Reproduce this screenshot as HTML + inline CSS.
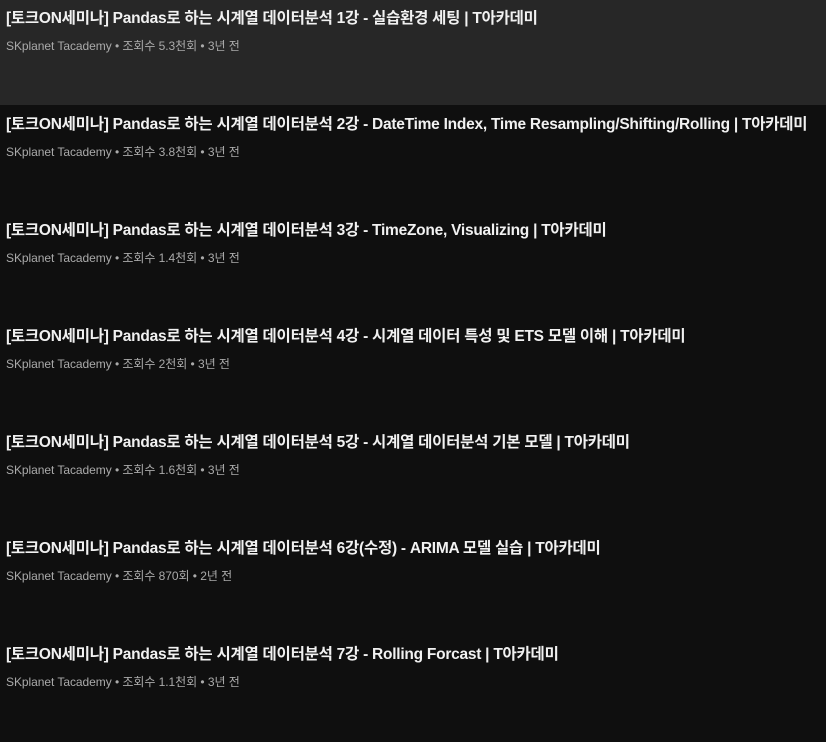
<!DOCTYPE html>
<html><head><meta charset="utf-8"><style>
body{margin:0;background:#0f0f0f;width:826px;height:737px;overflow:hidden;font-family:"Liberation Sans","Noto Sans CJK KR",sans-serif;}
.row{position:absolute;left:0;width:826px;height:106px;}
.row.h{background:#272727;height:105px}
.t{position:absolute;left:6px;top:8px;font-size:15.5px;font-weight:bold;color:#f1f1f1;white-space:nowrap;line-height:22px;letter-spacing:-0.25px}
.m{position:absolute;left:6px;top:38px;font-size:12px;color:#aaa;white-space:nowrap;line-height:16px;letter-spacing:-0.05px}
</style></head><body>
<div class="row h" style="top:0"><div class="t">[토크ON세미나] Pandas로 하는 시계열 데이터분석 1강 - 실습환경 세팅 | T아카데미</div><div class="m">SKplanet Tacademy • 조회수 5.3천회 • 3년 전</div></div>
<div class="row" style="top:106px"><div class="t">[토크ON세미나] Pandas로 하는 시계열 데이터분석 2강 - DateTime Index, Time Resampling/Shifting/Rolling | T아카데미</div><div class="m">SKplanet Tacademy • 조회수 3.8천회 • 3년 전</div></div>
<div class="row" style="top:212px"><div class="t">[토크ON세미나] Pandas로 하는 시계열 데이터분석 3강 - TimeZone, Visualizing | T아카데미</div><div class="m">SKplanet Tacademy • 조회수 1.4천회 • 3년 전</div></div>
<div class="row" style="top:318px"><div class="t">[토크ON세미나] Pandas로 하는 시계열 데이터분석 4강 - 시계열 데이터 특성 및 ETS 모델 이해 | T아카데미</div><div class="m">SKplanet Tacademy • 조회수 2천회 • 3년 전</div></div>
<div class="row" style="top:424px"><div class="t">[토크ON세미나] Pandas로 하는 시계열 데이터분석 5강 - 시계열 데이터분석 기본 모델 | T아카데미</div><div class="m">SKplanet Tacademy • 조회수 1.6천회 • 3년 전</div></div>
<div class="row" style="top:530px"><div class="t">[토크ON세미나] Pandas로 하는 시계열 데이터분석 6강(수정) - ARIMA 모델 실습 | T아카데미</div><div class="m">SKplanet Tacademy • 조회수 870회 • 2년 전</div></div>
<div class="row" style="top:636px"><div class="t">[토크ON세미나] Pandas로 하는 시계열 데이터분석 7강 - Rolling Forcast | T아카데미</div><div class="m">SKplanet Tacademy • 조회수 1.1천회 • 3년 전</div></div>
</body></html>
